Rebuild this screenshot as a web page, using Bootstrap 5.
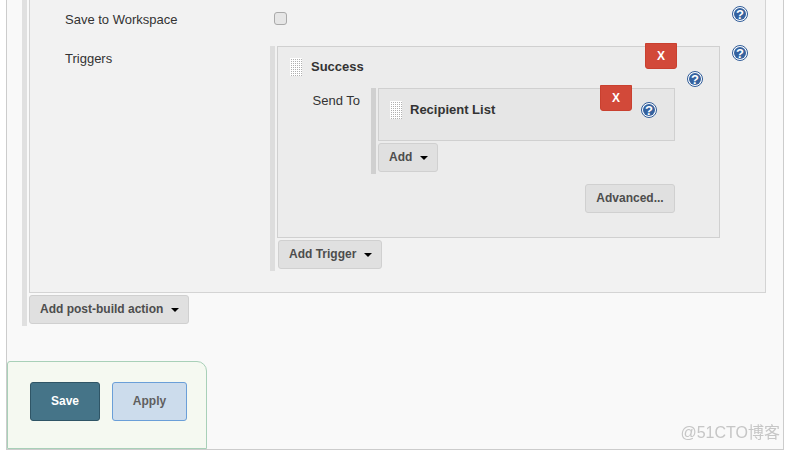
<!DOCTYPE html>
<html lang="en">
<head>
<meta charset="utf-8">
<title>Post-build actions</title>
<link href="https://cdn.jsdelivr.net/npm/bootstrap@5.3.0/dist/css/bootstrap.min.css" rel="stylesheet">
<style>
html,body{margin:0;height:451px;overflow:hidden;background:#fff}
body{font-family:"Liberation Sans",Arial,sans-serif;font-size:13px;line-height:20px;color:#333}
.frame-box{position:relative;margin-left:6px;width:778px;height:450px;background:#f9f9f9;border:1px solid #ccc;border-top:0}
.section-rail{margin-left:15px;border-left:5px solid #e0e0e0;padding-left:2px;padding-bottom:2px}
.config-box{width:737px;background:#f2f2f2;border:1px solid #d4d4d4;border-top:0;padding-bottom:21px}
.row-first{height:46px}
.field-label{width:240px;padding-left:35px;flex:none}
.row-first .field-label{padding-top:10px}
.row-second .field-label{padding-top:3px}
.row-first .form-check-input{width:13px;height:13px;margin:12px 0 0 4px;background-color:#e6e6e6;border:1px solid #aaa;border-radius:3px}
.value-col{width:450px;flex:none}
.row-first .value-col{width:462px}
.help-out{margin:6px 0 0 0}
.row-second .help-out{margin:-1px 0 0 12px}
.help-mark{display:block;width:16px;height:16px;flex:none}
.rail{border-left:5px solid #ddd;padding:0 0 2px 2px}
.rail-dark{border-left-color:#d0d0d0}
.plugin-box{position:relative;border:1px solid #d0d0d0}
.box-outer{background:#ececec;height:192px;width:443px}
.box-inner{background:#e6e6e6;height:53px;width:297px}
.box-head{display:flex;align-items:flex-start}
.box-outer>.box-head{padding:11px 0 0 12px;height:41px}
.box-inner>.box-head{padding:12px 0 0 11px}
.drag-grip{width:12px;height:18px;flex:none;background-color:#b0b0b0;background-image:linear-gradient(to right,#fff 1px,transparent 1px),linear-gradient(#fff 1px,transparent 1px);background-size:2px 2px}
.box-title{font-weight:700;font-size:13px;line-height:18px;margin-left:9px;color:#333}
.box-inner .box-title{margin-left:8px}
.box-outer>.box-head .help-mark{margin:13px 16px 0 auto}
.box-inner>.box-head .help-mark{margin:1px 17px 0 auto}
.btn.remove-btn{position:absolute;width:32px;height:26px;padding:0;background:#d24939;border:1px solid #c9402f;border-radius:0 0 3px 3px;color:#fff;font-size:12px;font-weight:700;line-height:24px}
.box-outer>.remove-btn{top:-4px;right:42px}
.box-inner>.remove-btn{top:-4px;right:42px}
.send-row{display:flex}
.send-label{width:93px;flex:none;padding:3px 11px 0 0;text-align:right}
.send-rail{height:86px}
.btn.tool-btn{height:29px;padding:0 9px 2px 10px;background:#e0e0e0;border:1px solid #d0d0d0;border-radius:3px;color:#4d4d4d;font-size:12px;font-weight:700;line-height:24px;display:block}
.btn.tool-btn.dropdown-toggle::after{border-top:4px solid #000;border-right:4px solid transparent;border-left:4px solid transparent;border-bottom:0;margin-left:8px;vertical-align:1px}
.gap-above{margin-top:2px}
.trigger-btn{margin-left:1px}
.adv-wrap{display:flex;justify-content:flex-end;width:297px;margin:10px 0 0 100px}
.btn.tool-btn.adv-btn{width:90px;padding:0 0 2px}
.save-bar{width:200px;height:88px;margin:35px 0 0 0;padding:20px 0 0 22px;background:#f5f9f1;border:1px solid #a8d0b8;border-top-right-radius:10px;border-top-left-radius:3px;display:flex;gap:12px}
.btn.save-btn,.btn.apply-btn{height:39px;padding:0;font-size:12px;font-weight:700;line-height:35px;border-radius:3px}
.btn.save-btn{width:70px;background:#457488;border:1px solid #2f5566;color:#fff}
.btn.apply-btn{width:75px;background:#ccdcec;border:1px solid #6a9fd8;color:#5f5f5f}
.watermark{position:absolute;right:3px;bottom:6px;font-family:"Liberation Sans","Noto Sans CJK SC",sans-serif;font-size:16px;line-height:20px;color:#c6c6c6;filter:blur(.3px)}
</style>
</head>
<body>
<div class="frame-box">
  <div class="section-rail">
    <div class="config-box">
      <div class="d-flex row-first">
        <div class="field-label">Save to Workspace</div>
        <div class="value-col"><input class="form-check-input" type="checkbox" aria-label="Save to Workspace"></div>
        <svg class="help-mark help-out" viewBox="0 0 16 16"><circle cx="8" cy="8" r="7.5" fill="#fff" stroke="#2f5b98"/><circle cx="8" cy="8" r="6" fill="#35629f"/><text x="8" y="12.6" text-anchor="middle" font-family="Liberation Sans" font-weight="700" font-size="13" fill="#fff">?</text></svg>
      </div>
      <div class="d-flex row-second">
        <div class="field-label">Triggers</div>
        <div class="value-col rail">
          <div class="plugin-box box-outer">
            <div class="box-head">
              <span class="drag-grip"></span><span class="box-title">Success</span>
              <svg class="help-mark" viewBox="0 0 16 16"><circle cx="8" cy="8" r="7.5" fill="#fff" stroke="#2f5b98"/><circle cx="8" cy="8" r="6" fill="#35629f"/><text x="8" y="12.6" text-anchor="middle" font-family="Liberation Sans" font-weight="700" font-size="13" fill="#fff">?</text></svg>
            </div>
            <button type="button" class="btn remove-btn">X</button>
            <div class="send-row">
              <div class="send-label">Send To</div>
              <div class="rail rail-dark send-rail">
                <div class="plugin-box box-inner">
                  <div class="box-head">
                    <span class="drag-grip"></span><span class="box-title">Recipient List</span>
                    <svg class="help-mark" viewBox="0 0 16 16"><circle cx="8" cy="8" r="7.5" fill="#fff" stroke="#2f5b98"/><circle cx="8" cy="8" r="6" fill="#35629f"/><text x="8" y="12.6" text-anchor="middle" font-family="Liberation Sans" font-weight="700" font-size="13" fill="#fff">?</text></svg>
                  </div>
                  <button type="button" class="btn remove-btn">X</button>
                </div>
                <button type="button" class="btn tool-btn dropdown-toggle gap-above">Add</button>
              </div>
            </div>
            <div class="adv-wrap"><button type="button" class="btn tool-btn adv-btn">Advanced...</button></div>
          </div>
          <button type="button" class="btn tool-btn dropdown-toggle gap-above trigger-btn">Add Trigger</button>
        </div>
        <svg class="help-mark help-out" viewBox="0 0 16 16"><circle cx="8" cy="8" r="7.5" fill="#fff" stroke="#2f5b98"/><circle cx="8" cy="8" r="6" fill="#35629f"/><text x="8" y="12.6" text-anchor="middle" font-family="Liberation Sans" font-weight="700" font-size="13" fill="#fff">?</text></svg>
      </div>
    </div>
    <button type="button" class="btn tool-btn dropdown-toggle gap-above">Add post-build action</button>
  </div>
  <div class="save-bar">
    <button type="button" class="btn save-btn">Save</button>
    <button type="button" class="btn apply-btn">Apply</button>
  </div>
  <div class="watermark">@51CTO博客</div>
</div>
<script src="https://cdn.jsdelivr.net/npm/bootstrap@5.3.0/dist/js/bootstrap.bundle.min.js"></script>
</body>
</html>
